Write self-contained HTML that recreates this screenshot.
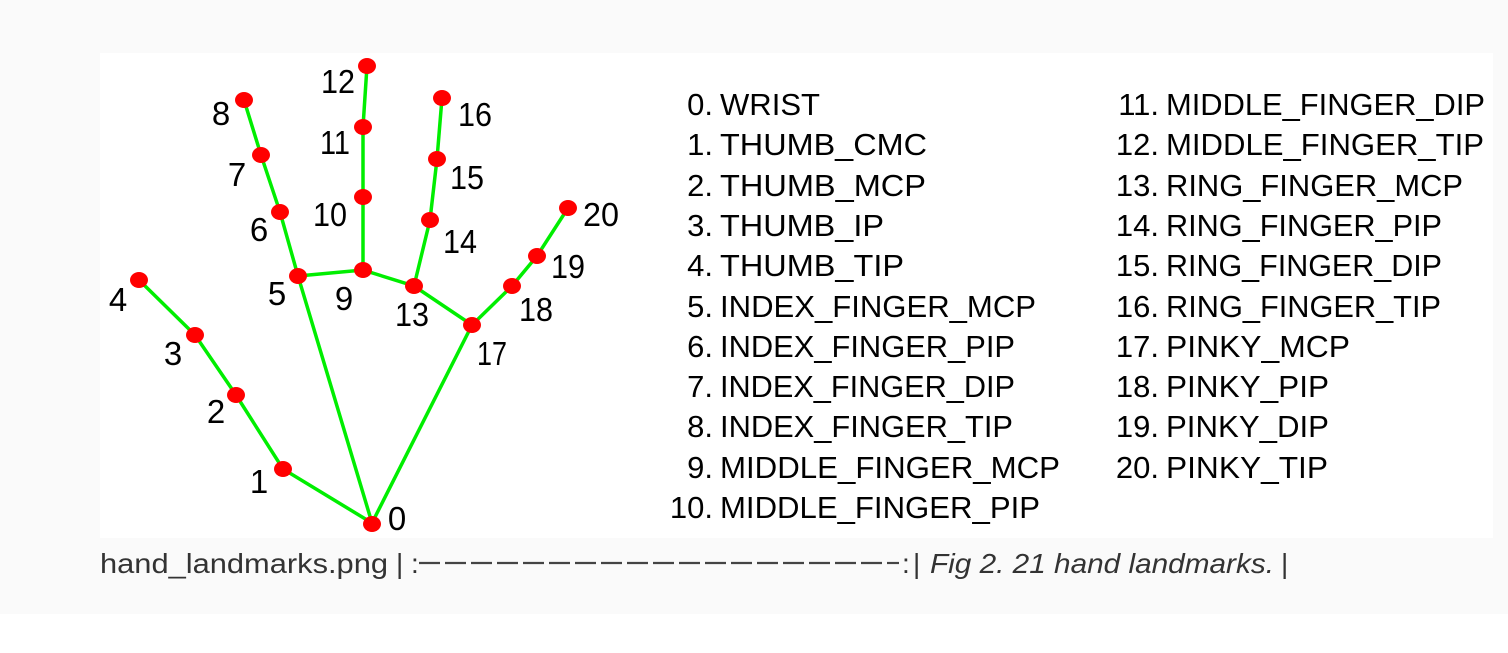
<!DOCTYPE html>
<html><head><meta charset="utf-8"><style>
html,body{margin:0;padding:0;background:#fff;}
body{width:1508px;height:653px;overflow:hidden;position:relative;}
.bg{position:absolute;left:0;top:0;width:1508px;height:614px;background:#fafafa;}
svg{position:absolute;left:0;top:0;}
</style></head><body>
<div class="bg"></div>
<svg width="1508" height="653" xmlns="http://www.w3.org/2000/svg">
<rect x="100" y="53" width="1393" height="485" fill="#fff"/>
<g stroke="#00ee00" stroke-width="3.5" fill="none" stroke-linecap="round">
<polyline points="372,523 283,469 236,395 195,335 139,280"/>
<polyline points="372,523 298,276 280,212 261,155 244,100"/>
<polyline points="298,276 363,270 414,286 472,325 372,523"/>
<polyline points="363,270 363,197 363,127 367,66"/>
<polyline points="414,286 430,220 437,159 442,98"/>
<polyline points="472,325 512,286 537,256 568,208"/>
</g>
<g fill="#ff0000">
<ellipse cx="372" cy="524" rx="9" ry="8"/><ellipse cx="283" cy="469" rx="9" ry="8"/>
<ellipse cx="236" cy="395" rx="9" ry="8"/><ellipse cx="195" cy="335" rx="9" ry="8"/>
<ellipse cx="139" cy="280" rx="9" ry="8"/><ellipse cx="298" cy="276" rx="9" ry="8"/>
<ellipse cx="280" cy="212" rx="9" ry="8"/><ellipse cx="261" cy="155" rx="9" ry="8"/>
<ellipse cx="244" cy="100" rx="9" ry="8"/><ellipse cx="363" cy="270" rx="9" ry="8"/>
<ellipse cx="363" cy="197" rx="9" ry="8"/><ellipse cx="363" cy="127" rx="9" ry="8"/>
<ellipse cx="367" cy="66" rx="9" ry="8"/><ellipse cx="414" cy="286" rx="9" ry="8"/>
<ellipse cx="430" cy="220" rx="9" ry="8"/><ellipse cx="437" cy="159" rx="9" ry="8"/>
<ellipse cx="442" cy="98" rx="9" ry="8"/><ellipse cx="472" cy="325" rx="9" ry="8"/>
<ellipse cx="512" cy="286" rx="9" ry="8"/><ellipse cx="537" cy="256" rx="9" ry="8"/>
<ellipse cx="568" cy="208" rx="9" ry="8"/>
</g>
<g font-family="Liberation Sans, sans-serif" font-size="33" fill="#000" text-anchor="middle">
<text x="397" y="530">0</text><text x="259" y="493">1</text><text x="216" y="423">2</text>
<text x="173" y="365">3</text><text x="118" y="311">4</text><text x="277" y="305">5</text>
<text x="259" y="241">6</text><text x="237" y="186">7</text><text x="221" y="125">8</text>
<text x="344" y="310">9</text><text x="330" y="226" textLength="34" lengthAdjust="spacingAndGlyphs">10</text><text x="335" y="154" textLength="30" lengthAdjust="spacingAndGlyphs">11</text>
<text x="338" y="93" textLength="34" lengthAdjust="spacingAndGlyphs">12</text><text x="412" y="326" textLength="34" lengthAdjust="spacingAndGlyphs">13</text><text x="460" y="253" textLength="34" lengthAdjust="spacingAndGlyphs">14</text>
<text x="467" y="189" textLength="34" lengthAdjust="spacingAndGlyphs">15</text><text x="475" y="126" textLength="34" lengthAdjust="spacingAndGlyphs">16</text><text x="492" y="365" textLength="30" lengthAdjust="spacingAndGlyphs">17</text>
<text x="536" y="321" textLength="34" lengthAdjust="spacingAndGlyphs">18</text><text x="568" y="278" textLength="34" lengthAdjust="spacingAndGlyphs">19</text><text x="601" y="226" textLength="36" lengthAdjust="spacingAndGlyphs">20</text>
</g>
<g font-family="Liberation Sans, sans-serif" font-size="31" fill="#000">
<g text-anchor="end">
<text x="713" y="115">0.</text><text x="713" y="155">1.</text><text x="713" y="196">2.</text>
<text x="713" y="236">3.</text><text x="713" y="276">4.</text><text x="713" y="317">5.</text>
<text x="713" y="357">6.</text><text x="713" y="397">7.</text><text x="713" y="437">8.</text>
<text x="713" y="478">9.</text><text x="713" y="518">10.</text>
<text x="1159" y="115">11.</text><text x="1159" y="155">12.</text><text x="1159" y="196">13.</text>
<text x="1159" y="236">14.</text><text x="1159" y="276">15.</text><text x="1159" y="317">16.</text>
<text x="1159" y="357">17.</text><text x="1159" y="397">18.</text><text x="1159" y="437">19.</text>
<text x="1159" y="478">20.</text>
</g>
<text x="720" y="115" textLength="100" lengthAdjust="spacingAndGlyphs">WRIST</text>
<text x="720" y="155" textLength="207" lengthAdjust="spacingAndGlyphs">THUMB_CMC</text>
<text x="720" y="196" textLength="206" lengthAdjust="spacingAndGlyphs">THUMB_MCP</text>
<text x="720" y="236" textLength="164" lengthAdjust="spacingAndGlyphs">THUMB_IP</text>
<text x="720" y="276" textLength="184" lengthAdjust="spacingAndGlyphs">THUMB_TIP</text>
<text x="720" y="317" textLength="316" lengthAdjust="spacingAndGlyphs">INDEX_FINGER_MCP</text>
<text x="720" y="357" textLength="295" lengthAdjust="spacingAndGlyphs">INDEX_FINGER_PIP</text>
<text x="720" y="397" textLength="295" lengthAdjust="spacingAndGlyphs">INDEX_FINGER_DIP</text>
<text x="720" y="437" textLength="293" lengthAdjust="spacingAndGlyphs">INDEX_FINGER_TIP</text>
<text x="720" y="478" textLength="340" lengthAdjust="spacingAndGlyphs">MIDDLE_FINGER_MCP</text>
<text x="720" y="518" textLength="320" lengthAdjust="spacingAndGlyphs">MIDDLE_FINGER_PIP</text>
<text x="1166" y="115" textLength="319" lengthAdjust="spacingAndGlyphs">MIDDLE_FINGER_DIP</text>
<text x="1166" y="155" textLength="318" lengthAdjust="spacingAndGlyphs">MIDDLE_FINGER_TIP</text>
<text x="1166" y="196" textLength="297" lengthAdjust="spacingAndGlyphs">RING_FINGER_MCP</text>
<text x="1166" y="236" textLength="276" lengthAdjust="spacingAndGlyphs">RING_FINGER_PIP</text>
<text x="1166" y="276" textLength="276" lengthAdjust="spacingAndGlyphs">RING_FINGER_DIP</text>
<text x="1166" y="317" textLength="275" lengthAdjust="spacingAndGlyphs">RING_FINGER_TIP</text>
<text x="1166" y="357" textLength="184" lengthAdjust="spacingAndGlyphs">PINKY_MCP</text>
<text x="1166" y="397" textLength="163" lengthAdjust="spacingAndGlyphs">PINKY_PIP</text>
<text x="1166" y="437" textLength="163" lengthAdjust="spacingAndGlyphs">PINKY_DIP</text>
<text x="1166" y="478" textLength="162" lengthAdjust="spacingAndGlyphs">PINKY_TIP</text>
</g>
<g font-family="Liberation Sans, sans-serif" font-size="28" fill="#333">
<text x="100" y="573" textLength="288" lengthAdjust="spacingAndGlyphs">hand_landmarks.png</text>
<text x="396" y="573">|</text>
<text x="411" y="573">:</text>
<g stroke="#444" stroke-width="2.2">
<line x1="419" y1="563" x2="440" y2="563"/><line x1="445" y1="563" x2="466" y2="563"/>
<line x1="471" y1="563" x2="492" y2="563"/><line x1="497" y1="563" x2="518" y2="563"/>
<line x1="523" y1="563" x2="544" y2="563"/><line x1="549" y1="563" x2="570" y2="563"/>
<line x1="575" y1="563" x2="596" y2="563"/><line x1="601" y1="563" x2="622" y2="563"/>
<line x1="627" y1="563" x2="648" y2="563"/><line x1="653" y1="563" x2="674" y2="563"/>
<line x1="679" y1="563" x2="700" y2="563"/><line x1="705" y1="563" x2="726" y2="563"/>
<line x1="731" y1="563" x2="752" y2="563"/><line x1="757" y1="563" x2="778" y2="563"/>
<line x1="783" y1="563" x2="804" y2="563"/><line x1="809" y1="563" x2="830" y2="563"/>
<line x1="835" y1="563" x2="856" y2="563"/><line x1="861" y1="563" x2="882" y2="563"/>
<line x1="887" y1="563" x2="899" y2="563"/>
</g>
<text x="902" y="573">:</text>
<text x="913" y="573">|</text>
<text x="930" y="573" font-style="italic" textLength="344" lengthAdjust="spacingAndGlyphs">Fig 2. 21 hand landmarks.</text>
<text x="1281" y="573">|</text>
</g>
</svg>
</body></html>
